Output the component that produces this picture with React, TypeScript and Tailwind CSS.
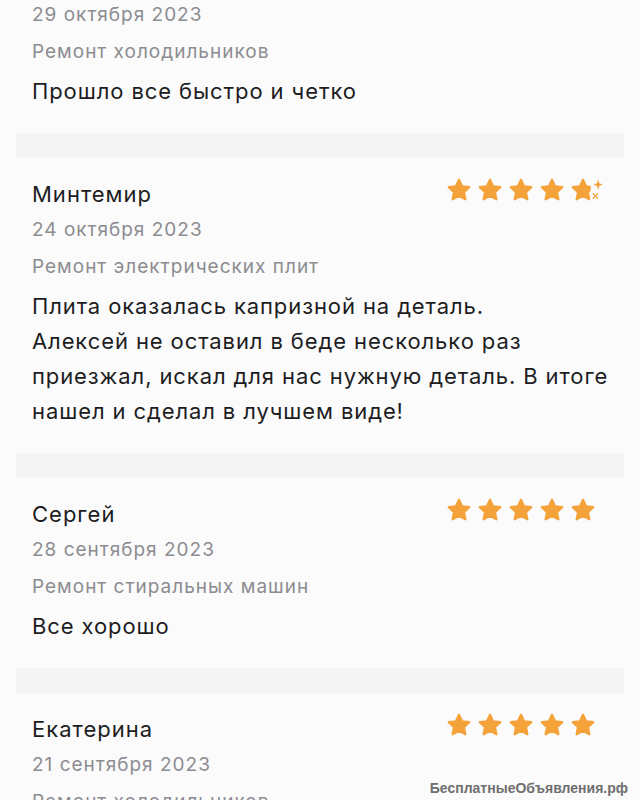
import React from "react";

const STAR = "12,2.5 14.9,8.6 21.5,9.4 16.6,14 17.9,20.6 12,17.3 6.1,20.6 7.4,14 2.5,9.4 9.1,8.6";

function Star() {
  return (
    <svg width="26" height="26" viewBox="0 0 24 24">
      <polygon points={STAR} fill="#f4a23a" stroke="#f4a23a" strokeWidth="2" strokeLinejoin="round" />
    </svg>
  );
}

function SparkleStar() {
  return (
    <svg width="40" height="26" viewBox="0 0 37 24">
      <defs>
        <clipPath id="cut">
          <rect x="0" y="0" width="19" height="24" />
        </clipPath>
      </defs>
      <polygon points={STAR} fill="#f4a23a" stroke="#f4a23a" strokeWidth="2" strokeLinejoin="round" clipPath="url(#cut)" />
      <path d="M26 2 L27 5.8 L30.5 7 L27 8.2 L26 12 L25 8.2 L21.5 7 L25 5.8 Z" fill="#f4a23a" />
      <path d="M21.5 15 L23.5 17 L25.5 15 L26 15.5 L24 17.5 L26 19.5 L25.5 20 L23.5 18 L21.5 20 L21 19.5 L23 17.5 L21 15.5 Z" fill="#f4a23a" stroke="#f4a23a" strokeWidth="0.8" />
    </svg>
  );
}

function Rating({ half }: { half?: boolean }) {
  return (
    <div className="w-[172px] flex items-center gap-[5px] -mt-2">
      <Star />
      <Star />
      <Star />
      <Star />
      {half ? <SparkleStar /> : <Star />}
    </div>
  );
}

interface Review {
  name?: string;
  date: string;
  service: string;
  text: string[];
  half?: boolean;
}

const reviews: Review[] = [
  { date: "29 октября 2023", service: "Ремонт холодильников", text: ["Прошло все быстро и четко"] },
  {
    name: "Минтемир",
    date: "24 октября 2023",
    service: "Ремонт электрических плит",
    text: [
      "Плита оказалась капризной на деталь.",
      "Алексей не оставил в беде несколько раз",
      "приезжал, искал для нас нужную деталь. В итоге",
      "нашел и сделал в лучшем виде!",
    ],
    half: true,
  },
  { name: "Сергей", date: "28 сентября 2023", service: "Ремонт стиральных машин", text: ["Все хорошо"] },
  { name: "Екатерина", date: "21 сентября 2023", service: "Ремонт холодильников", text: [] },
];

function ReviewItem({ r }: { r: Review }) {
  return (
    <div className="pl-8 pr-[22px]">
      {r.name && (
        <div className="flex items-center justify-between h-[36px]">
          <div className="text-[22px] tracking-[1px] text-[#1d1d1f]">{r.name}</div>
          <Rating half={r.half} />
        </div>
      )}
      <div className="h-[37px] flex items-center text-[19px] tracking-[1px] text-[#8c8c91]">{r.date}</div>
      <div className="h-[37px] flex items-center text-[19px] tracking-[1px] text-[#8c8c91]">{r.service}</div>
      {r.text.length > 0 && (
        <div className="mt-[3px] text-[22px] tracking-[0.9px] leading-[35px] text-[#1d1d1f] whitespace-nowrap">
          {r.text.map((line, i) => (
            <div key={i}>{line}</div>
          ))}
        </div>
      )}
    </div>
  );
}

export default function App() {
  return (
    <div
      className="relative w-[640px] h-[800px] overflow-hidden bg-[#fbfbfb]"
      style={{ fontFamily: "Inter, 'Noto Sans', sans-serif" }}
    >
      <div className="-mt-[3px]">
        {reviews.map((r, i) => (
          <div key={i}>
            <ReviewItem r={r} />
            {i < reviews.length - 1 && (
              <div className="mx-4 mt-[24px] mb-[18px] h-[25px] bg-[#f4f4f4]" />
            )}
          </div>
        ))}
      </div>
      <div
        className="absolute right-[8px] bottom-[1px] px-1 text-[14px] font-bold text-[#6f6f6f] bg-[#fbfbfb]/80"
        style={{ fontFamily: "'Liberation Sans', Arial, sans-serif" }}
      >
        БесплатныеОбъявления.рф
      </div>
    </div>
  );
}
